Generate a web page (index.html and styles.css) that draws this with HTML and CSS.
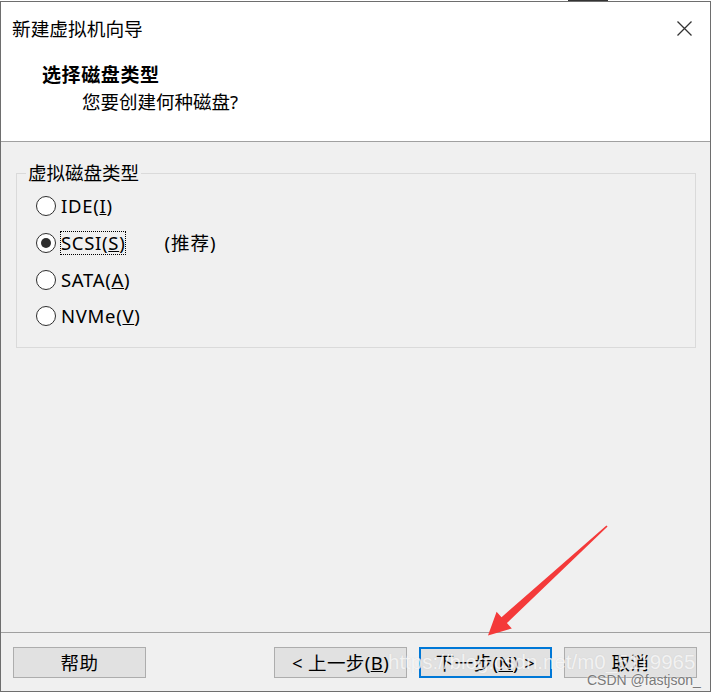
FILE: index.html
```html
<!DOCTYPE html>
<html lang="zh-CN">
<head>
<meta charset="utf-8">
<title>新建虚拟机向导</title>
<link rel="stylesheet" href="styles.css">
</head>
<body>
<div class="top-mark"></div>
<div class="window">
  <div class="header">
    <div class="title-row">
      <span class="title">新建虚拟机向导</span>
      <svg class="close" width="15" height="15" viewBox="0 0 15 15"><path d="M0.5 0.5 L14.5 14.5 M14.5 0.5 L0.5 14.5" stroke="#333" stroke-width="1.3" fill="none"/></svg>
    </div>
    <div class="heading">选择磁盘类型</div>
    <div class="subheading">您要创建何种磁盘?</div>
  </div>
  <div class="content">
    <fieldset class="group">
      <legend>虚拟磁盘类型</legend>
      <div class="radio-list">
        <div class="radio-row"><span class="radio"></span><span class="label">IDE(<u>I</u>)</span></div>
        <div class="radio-row"><span class="radio checked"></span><span class="label focus">SCSI(<u>S</u>)</span><span class="recommend">(推荐)</span></div>
        <div class="radio-row"><span class="radio"></span><span class="label">SATA(<u>A</u>)</span></div>
        <div class="radio-row"><span class="radio"></span><span class="label">NVMe(<u>V</u>)</span></div>
      </div>
    </fieldset>
  </div>
  <div class="footer">
    <div class="btn">帮助</div>
    <div class="btn push">&lt; 上一步(<u>B</u>)</div>
    <div class="btn primary">下一步(<u>N</u>) &gt;</div>
    <div class="btn">取消</div>
  </div>
</div>
<svg class="arrow" width="718" height="697" viewBox="0 0 718 697">
  <polygon points="606.4,525.4 607.6,526.6 506.9,623.1 511.8,628.4 488,635.5 496.6,611.8 501.5,617.2" fill="#f43a3a"/>
</svg>
<div class="watermark">https://blog.csdn.net/m0_5119965</div>
<div class="credit">CSDN @fastjson_</div>
</body>
</html>
```
FILE: styles.css
```css
html, body {
  margin: 0;
  padding: 0;
}
body {
  position: relative;
  width: 718px;
  height: 697px;
  overflow: hidden;
  background: #fff;
  font-family: "Noto Sans", "Noto Sans CJK SC", sans-serif;
  font-size: 18.5px;
  color: #000;
}
.top-mark {
  position: absolute;
  left: 568px;
  top: 0;
  width: 40px;
  height: 1px;
  background: #333;
}
.window {
  margin-top: 1px;
  width: 709px;
  height: 689px;
  border: 1px solid #6e6e6e;
  display: flex;
  flex-direction: column;
  background: #f0f0f0;
}
.header {
  box-sizing: border-box;
  height: 140px;
  background: #fff;
  border-bottom: 1px solid #a0a0a0;
  padding-top: 15px;
}
.title-row {
  display: flex;
  justify-content: space-between;
  align-items: center;
  height: 24px;
  padding: 0 18px 0 11px;
}
.title {
  line-height: 24px;
  font-size: 18.7px;
}
.close {
  display: block;
  margin-top: -2px;
}
.heading {
  margin-top: 22px;
  padding-left: 41px;
  line-height: 24px;
  font-weight: bold;
  font-size: 19px;
  letter-spacing: 0.6px;
}
.subheading {
  margin-top: 3px;
  padding-left: 81px;
  line-height: 24px;
}
.content {
  flex: 1;
  padding: 20px 0 0 15px;
}
.group {
  box-sizing: border-box;
  width: 680px;
  margin: 0;
  padding: 0 0 12px 9px;
  border: 1px solid #dadada;
  min-width: 0;
}
.group legend {
  padding: 0 2px;
  line-height: 22px;
}
.radio-list {
  margin-top: 4px;
  display: flex;
  flex-direction: column;
}
.radio-row {
  display: flex;
  align-items: center;
  height: 36.67px;
}
.radio {
  box-sizing: border-box;
  width: 20px;
  height: 20px;
  margin-left: 10px;
  margin-right: 5px;
  border: 1.6px solid #2e2e2e;
  border-radius: 50%;
  background: #fff;
  display: flex;
  align-items: center;
  justify-content: center;
}
.radio.checked::after {
  content: "";
  width: 10px;
  height: 10px;
  border-radius: 50%;
  background: #2e2e2e;
}
.label {
  line-height: 22px;
  letter-spacing: 0.7px;
}
.label.focus {
  outline: 1px dotted #000;
  outline-offset: 0;
}
.recommend {
  margin-left: 39px;
  line-height: 22px;
  letter-spacing: 1px;
}
.footer {
  box-sizing: border-box;
  height: 59px;
  border-top: 1px solid #a0a0a0;
  padding: 14px 13px 0 12px;
  display: flex;
  align-items: flex-start;
  gap: 12px;
}
.btn {
  box-sizing: border-box;
  width: 133px;
  height: 31px;
  border: 1px solid #adadad;
  background: #e1e1e1;
  display: flex;
  align-items: center;
  justify-content: center;
  line-height: 22px;
  letter-spacing: 0.4px;
  white-space: pre;
}
.btn.push {
  margin-left: auto;
}
.btn.primary {
  border: 2px solid #0078d7;
}
.arrow {
  position: absolute;
  left: 0;
  top: 0;
  pointer-events: none;
}
.watermark {
  position: absolute;
  left: 388px;
  top: 650px;
  font-family: "Liberation Sans", Arial, sans-serif;
  font-size: 20.5px;
  line-height: 24px;
  color: rgba(255, 255, 255, 0.75);
  text-shadow: 0 0 1px rgba(160, 160, 160, 0.35);
  white-space: nowrap;
  pointer-events: none;
}
.credit {
  position: absolute;
  left: 587px;
  top: 672px;
  font-family: "Liberation Sans", Arial, sans-serif;
  font-size: 14px;
  line-height: 16px;
  color: #7a7a7a;
  text-shadow: 0 0 2px #fff;
  white-space: nowrap;
}
```
